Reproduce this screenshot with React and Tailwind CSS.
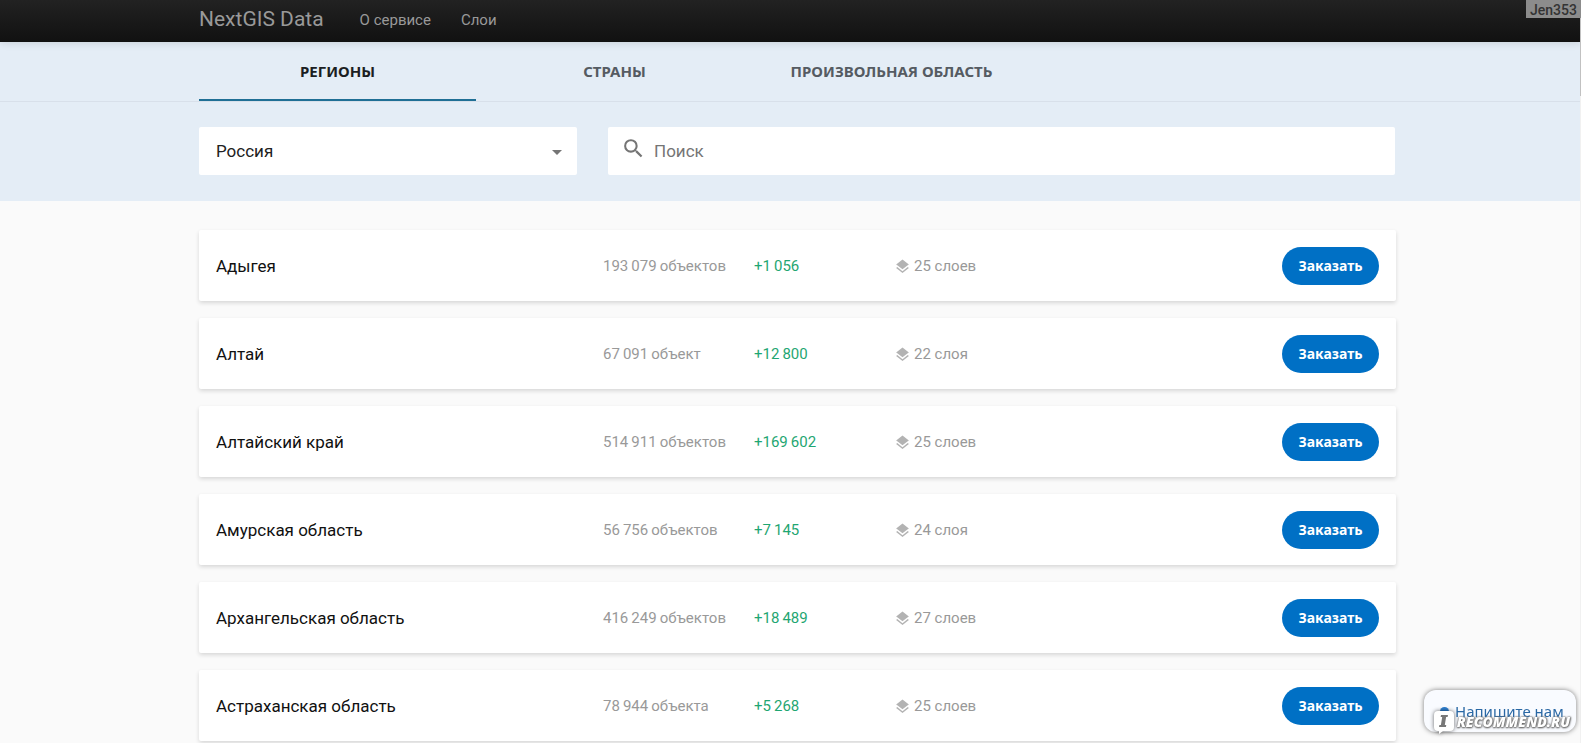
const tabs = [
	{ label: 'РЕГИОНЫ', active: true },
	{ label: 'СТРАНЫ', active: false },
	{ label: 'ПРОИЗВОЛЬНАЯ ОБЛАСТЬ', active: false },
]

// \u2009 is a thin space, used as the thousands separator
const regions = [
	{ name: 'Адыгея', objects: '193\u2009079\u2009объектов', added: '+1\u2009056', layers: '25 слоев' },
	{ name: 'Алтай', objects: '67\u2009091\u2009объект', added: '+12\u2009800', layers: '22 слоя' },
	{ name: 'Алтайский край', objects: '514\u2009911\u2009объектов', added: '+169\u2009602', layers: '25 слоев' },
	{ name: 'Амурская область', objects: '56\u2009756\u2009объектов', added: '+7\u2009145', layers: '24 слоя' },
	{ name: 'Архангельская область', objects: '416\u2009249\u2009объектов', added: '+18\u2009489', layers: '27 слоев' },
	{ name: 'Астраханская область', objects: '78\u2009944\u2009объекта', added: '+5\u2009268', layers: '25 слоев' },
]

function SearchIcon() {
	return (
		<svg viewBox="0 0 24 24" className="size-[25px] shrink-0 -mt-1.5 fill-[#757575]" aria-hidden="true">
			<path d="M15.5 14h-.79l-.28-.27A6.47 6.47 0 0 0 16 9.5 6.5 6.5 0 1 0 9.5 16c1.61 0 3.09-.59 4.23-1.57l.27.28v.79l5 4.99L20.49 19l-4.99-5zm-6 0C7.01 14 5 11.99 5 9.5S7.01 5 9.5 5 14 7.01 14 9.5 11.99 14 9.5 14z" />
		</svg>
	)
}

function LayersIcon() {
	return (
		<svg viewBox="0 0 24 24" className="size-[17px] shrink-0 fill-[#b3b3b3]" aria-hidden="true">
			<path d="m11.99 18.54-7.37-5.73L3 14.07l9 7 9-7-1.63-1.27-7.38 5.74zM12 16l7.36-5.73L21 9l-9-7-9 7 1.63 1.27L12 16z" />
		</svg>
	)
}

function Header() {
	return (
		<header className="relative z-10 h-[42px] pl-[14px] bg-linear-to-b from-[#222222] to-[#111111] shadow-[0_1px_8px_rgba(0,0,0,0.12)]">
			<nav className="max-w-[1197px] h-10 mx-auto flex items-center text-[#999999]">
				<a href="#" className="text-[21px] mr-9">
					NextGIS Data
				</a>
				<a href="#about" className="text-[15px] mr-[30px]">
					О сервисе
				</a>
				<a href="#layers" className="text-[15px]">
					Слои
				</a>
			</nav>
		</header>
	)
}

function Tabs() {
	return (
		<div className="pl-[14px] border-b border-[#d8e0ea]">
			<div role="tablist" className="max-w-[1197px] mx-auto flex">
				{tabs.map((tab) => (
					<button
						key={tab.label}
						role="tab"
						aria-selected={tab.active}
						className={
							tab.active
								? "min-w-[277px] h-[59px] pt-0.5 px-8 font-['Noto_Sans',sans-serif] text-[15px] font-bold text-[#1b1e22] border-b-2 border-[#1f6f95]"
								: "min-w-[277px] h-[59px] pt-0.5 px-8 font-['Noto_Sans',sans-serif] text-[15px] font-bold text-[#555b62] border-b-2 border-transparent"
						}>
						{tab.label}
					</button>
				))}
			</div>
		</div>
	)
}

function Filters() {
	return (
		<div className="pl-[14px] pt-[25px] pb-[26px]">
			<div className="max-w-[1197px] mx-auto pr-px flex gap-[31px]">
				<div className="relative w-[378px] shrink-0">
					<select
						aria-label="Страна"
						defaultValue="ru"
						className="appearance-none w-full h-12 pt-0.5 pl-[17px] pr-10 rounded-xs bg-white text-[17px] text-[#212121]">
						<option value="ru">Россия</option>
					</select>
					<span className="absolute right-[15px] top-[23px] border-x-[5px] border-t-[5px] border-x-transparent border-t-[#757575] pointer-events-none" />
				</div>
				<label className="grow h-12 pl-[13px] flex items-center gap-2 rounded-xs bg-white">
					<SearchIcon />
					<input
						type="search"
						aria-label="Поиск"
						placeholder="Поиск"
						className="grow h-full outline-none text-[17px] text-[#212121] placeholder:text-[#757575]"
					/>
				</label>
			</div>
		</div>
	)
}

function RegionCard({ region }) {
	return (
		<li className="h-[71px] pt-px px-[17px] flex items-center rounded-xs bg-white shadow-[0_2px_4px_rgba(0,0,0,0.14)] leading-6">
			<span className="w-[387px] text-[17px] text-[#111111]">{region.name}</span>
			<span className="w-[151px] text-[15px] text-[#999999]">{region.objects}</span>
			<span className="w-[140px] text-[15px] text-[#1fa672]">{region.added}</span>
			<span className="flex items-center gap-[3px] text-[15px] text-[#999999]">
				<LayersIcon />
				{region.layers}
			</span>
			<button className="ml-auto h-[38px] w-[97px] rounded-full bg-[#0070c5] font-['Noto_Sans',sans-serif] text-[14px] font-bold text-white">
				Заказать
			</button>
		</li>
	)
}

function ChatWidget() {
	return (
		<div className="fixed right-[5px] bottom-[11px] z-20">
			<button className="w-[152px] h-[42px] pl-4 flex items-center gap-1.5 rounded-xl bg-[#f9fbff] shadow-[0_0_5px_rgba(0,0,0,0.5)] font-['Noto_Sans',sans-serif] text-[15px] leading-4 text-[#2a68a5] whitespace-nowrap">
				<span className="size-[9px] shrink-0 rounded-full bg-[#2f7fd0]" />
				Напишите нам
			</button>
		</div>
	)
}

function Watermark() {
	return (
		<div className="fixed right-[11px] bottom-[9px] z-30 flex items-center gap-[3px] pointer-events-none">
			<svg viewBox="0 0 20 24" className="w-5 h-6 drop-shadow-[0_0_2px_rgba(0,0,0,0.6)]" aria-hidden="true">
				<path d="M4 1h12a4 4 0 0 1 4 4v12a4 4 0 0 1-4 4H9l-4 3v-3H4a4 4 0 0 1-4-4V5a4 4 0 0 1 4-4z" fill="#ffffff" />
				<path d="M7 5h7l-.4 2h-1.500l-1.300 8h1.500l-.4 2H5l.4-2h1.500l1.300-8H6.600z" fill="#777777" />
			</svg>
			<span className="font-['Open_Sans',sans-serif] text-[14px] leading-[10px] font-extrabold italic text-white [text-shadow:0_0_2px_#666,0_1px_2px_#666,1px_0_2px_#777]">
				RECOMMEND.RU
			</span>
		</div>
	)
}

export default function App() {
	return (
		<div className="h-screen overflow-hidden bg-[#fafafa] font-[Roboto,sans-serif]">
			<Header />
			<div className="bg-[#e4edf6]">
				<Tabs />
				<Filters />
			</div>
			<main className="pl-[14px] pt-[29px]">
				<ul className="max-w-[1197px] mx-auto flex flex-col gap-[17px]">
					{regions.map((region) => (
						<RegionCard key={region.name} region={region} />
					))}
				</ul>
			</main>
			{/* scrollbar track and thumb */}
			<div className="fixed right-0 inset-y-0 z-10 w-px bg-[#f1f1f1]">
				<div className="h-24 bg-[#c1c1c1]" />
			</div>
			<div className="fixed right-0 top-0 z-20 h-[18px] px-1 bg-[#8c8c8c] text-[14px] leading-[20px] font-medium text-[#333333]">
				Jen353
			</div>
			<ChatWidget />
			<Watermark />
		</div>
	)
}
